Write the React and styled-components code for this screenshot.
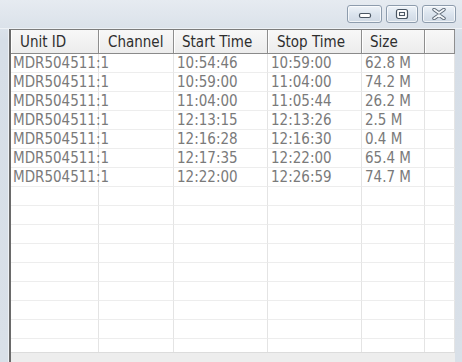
import React from "react";
import styled, { createGlobalStyle } from "styled-components";

const Global = createGlobalStyle`
  html, body { margin: 0; padding: 0; background: #dfe5ec; }
  * { box-sizing: border-box; }
`;

const COLS = "88px 75px 94px 94px 63px 30px";

const Window = styled.div`
  width: 462px;
  height: 362px;
  display: flex;
  flex-direction: column;
  background: linear-gradient(#e6ebf1, #d6dee7 40px, #d9e0e8);
  font-family: "DejaVu Sans Condensed", "DejaVu Sans", sans-serif;
  font-stretch: condensed;
  overflow: hidden;
`;

const TitleBar = styled.div`
  height: 29px;
  display: flex;
  justify-content: flex-end;
  align-items: flex-start;
  padding: 5px 6px 0 0;
  gap: 4px;
  border-bottom: 1px solid #eef2f6;
`;

const WinButton = styled.div`
  width: ${(p) => p.$w}px;
  height: 18px;
  border: 1px solid #8d9cad;
  border-radius: 3px;
  background: linear-gradient(#eef3f8, #dbe4ee 50%, #cfd9e4);
  box-shadow: inset 0 0 0 1px rgba(255, 255, 255, 0.7);
  display: flex;
  align-items: center;
  justify-content: center;
`;

const Main = styled.div`
  flex: 1;
  display: flex;
  min-height: 0;
`;

const SideFrame = styled.div`
  width: ${(p) => p.$w}px;
  border-right: ${(p) => (p.$line ? "1px solid #eef1f5" : "none")};
`;

const ListPane = styled.div`
  width: 446px;
  display: flex;
  flex-direction: column;
  border-left: 2px solid #6a6a6a;
  border-top: 1px solid #7c7c7c;
  background: #ffffff;
`;

const HeaderRow = styled.div`
  display: grid;
  grid-template-columns: ${COLS};
  height: 24px;
  border-bottom: 1px solid #8a8a8a;
  background: linear-gradient(#f8f8f8, #ececec);
`;

const HeaderCell = styled.div`
  border-right: 1px solid #8e8e8e;
  box-shadow: inset 1px 0 0 #ffffff;
  padding: 2px 0 0 ${(p) => p.$pad}px;
  font-size: 15px;
  color: #2e2e2e;
  line-height: 21px;
  white-space: nowrap;
  overflow: hidden;
`;

const Body = styled.div`
  flex: 1;
  overflow: hidden;
`;

const Row = styled.div`
  display: grid;
  grid-template-columns: ${COLS};
  height: 19px;
`;

const Cell = styled.div`
  border-right: 1px solid #e4e4e4;
  border-bottom: 1px solid #ededed;
  padding: 1px 0 0 ${(p) => p.$pad}px;
  font-size: 15px;
  line-height: 17px;
  color: #7a7a7a;
  white-space: nowrap;
`;

const BottomBar = styled.div`
  height: 10px;
  border-top: 1px solid #dcdcdc;
  background: #ededed;
`;

const headers = [
  { t: "Unit ID", p: 9 },
  { t: "Channel", p: 9 },
  { t: "Start Time", p: 8 },
  { t: "Stop Time", p: 9 },
  { t: "Size", p: 8 },
  { t: "", p: 0 },
];

const data = [
  ["MDR504511:1", "", "10:54:46", "10:59:00", "62.8 M"],
  ["MDR504511:1", "", "10:59:00", "11:04:00", "74.2 M"],
  ["MDR504511:1", "", "11:04:00", "11:05:44", "26.2 M"],
  ["MDR504511:1", "", "12:13:15", "12:13:26", "2.5 M"],
  ["MDR504511:1", "", "12:16:28", "12:16:30", "0.4 M"],
  ["MDR504511:1", "", "12:17:35", "12:22:00", "65.4 M"],
  ["MDR504511:1", "", "12:22:00", "12:26:59", "74.7 M"],
];

const pads = [2, 3, 3, 3, 3, 0];

function MinIcon() {
  return (
    <svg width="16" height="10" viewBox="0 0 16 10">
      <rect x="2.5" y="4.5" width="11" height="4" rx="1.5" fill="#fff" stroke="#4a5663" strokeWidth="1.2" />
    </svg>
  );
}
function RestoreIcon() {
  return (
    <svg width="14" height="12" viewBox="0 0 14 12">
      <rect x="1.5" y="1.5" width="11" height="9" rx="2" fill="#fff" stroke="#4a5663" strokeWidth="1.2" />
      <rect x="4.5" y="4.5" width="5" height="3" fill="none" stroke="#4a5663" strokeWidth="1.1" />
    </svg>
  );
}
function CloseIcon() {
  return (
    <svg width="16" height="12" viewBox="0 0 16 12">
      <path d="M3 1.5 L8 5 L13 1.5 M3 10.5 L8 7 L13 10.5" fill="none" stroke="#5a6674" strokeWidth="3.4" strokeLinecap="round" strokeLinejoin="round" />
      <path d="M3 1.5 L8 5 L13 1.5 M3 10.5 L8 7 L13 10.5" fill="none" stroke="#f4f7fa" strokeWidth="1.6" strokeLinecap="round" strokeLinejoin="round" />
    </svg>
  );
}

export default function App() {
  const rows = [];
  for (let i = 0; i < 16; i++) rows.push(data[i] ? [...data[i], ""] : ["", "", "", "", "", ""]);
  return (
    <>
      <Global />
      <Window>
        <TitleBar>
          <WinButton $w={35}><MinIcon /></WinButton>
          <WinButton $w={32}><RestoreIcon /></WinButton>
          <WinButton $w={34}><CloseIcon /></WinButton>
        </TitleBar>
        <Main>
          <SideFrame $w={9} $line />
          <ListPane>
            <HeaderRow>
              {headers.map((h, i) => (
                <HeaderCell key={i} $pad={h.p}>{h.t}</HeaderCell>
              ))}
            </HeaderRow>
            <Body>
              {rows.map((r, i) => (
                <Row key={i}>
                  {r.map((c, j) => (
                    <Cell key={j} $pad={pads[j]}>{c}</Cell>
                  ))}
                </Row>
              ))}
            </Body>
            <BottomBar />
          </ListPane>
          <SideFrame $w={7} />
        </Main>
      </Window>
    </>
  );
}
